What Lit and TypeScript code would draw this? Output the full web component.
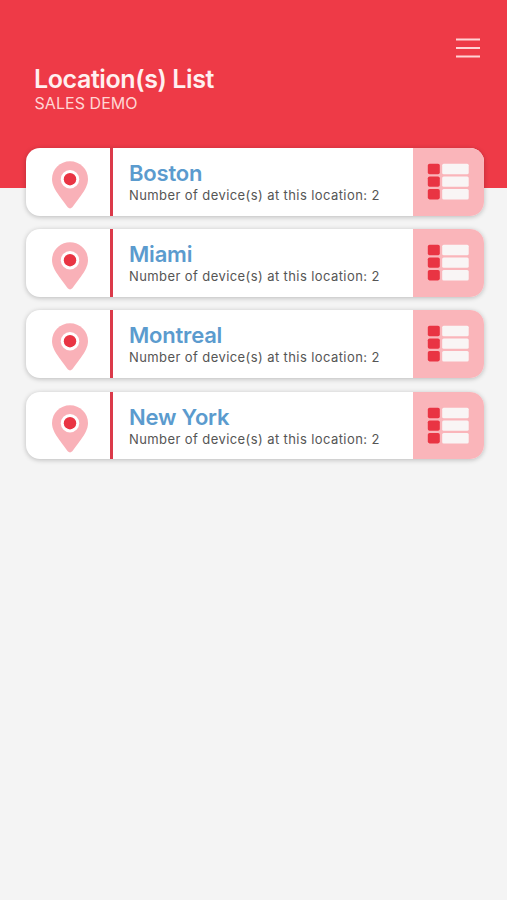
import { LitElement, html, svg, css } from "lit";
import { customElement, property } from "lit/decorators.js";

@customElement("location-card")
class LocationCard extends LitElement {
  @property() name = "";
  @property({ type: Number }) devices = 0;

  static styles = css`
    :host {
      display: flex;
      height: 67.5px;
      border-radius: 14px;
      overflow: hidden;
      background: #fff;
      box-shadow: 0 1px 5px rgba(0, 0, 0, 0.24);
    }
    .pin {
      box-sizing: border-box;
      width: 84px;
      padding: 13px 0 0 26px;
      flex: none;
    }
    svg {
      display: block;
    }
    .rule {
      width: 3px;
      flex: none;
      background: #db3a4a;
    }
    .info {
      flex: 1;
      padding: 12px 0 0 16px;
      white-space: nowrap;
    }
    .name {
      font-size: 22px;
      line-height: 26px;
      font-weight: 600;
      letter-spacing: -0.2px;
      color: #5b9bce;
    }
    .count {
      font-size: 13px;
      line-height: 18px;
      letter-spacing: 0.41px;
      color: #555;
    }
    .list {
      box-sizing: border-box;
      width: 71px;
      padding: 15px 0 0 14px;
      flex: none;
      background: #fab5ba;
    }
  `;

  render() {
    return html`
      <div class="pin">
        <svg width="36" height="48" viewBox="0 0 36 48">
          <path d="M18 .3C8 .3 0 8.300 0 18C0 24 3.500 29.500 7 34.500L15.700 46.300Q18 48.500 20.300 46.300L29 34.500C32.500 29.500 36 24 36 18C36 8.300 28 .3 18 .3Z" fill="#f9b1b8" />
          <circle cx="18" cy="18.200" r="9.200" fill="#fff" />
          <circle cx="18" cy="18.200" r="6.200" fill="#e93443" />
        </svg>
      </div>
      <div class="rule"></div>
      <div class="info">
        <div class="name">${this.name}</div>
        <div class="count">Number of device(s) at this location: ${this.devices}</div>
      </div>
      <div class="list">
        <svg width="42" height="37" viewBox="0 0 42 37">
          ${[0.8, 13.4, 26].map(
            (y) => svg`
              <rect x=".8" y=${y} width="12" height="10.4" rx="1.8" fill="#e93443" />
              <rect x="15.2" y=${y} width="26.500" height="10.4" rx="1.500" fill="#f9f5f5" />
            `
          )}
        </svg>
      </div>
    `;
  }
}

@customElement("app-root")
class AppRoot extends LitElement {
  static styles = css`
    :host {
      display: block;
      box-sizing: border-box;
      height: 900px;
      overflow: hidden;
      font-family: Inter, "Liberation Sans", sans-serif;
      background: linear-gradient(#ee3a47 188px, #f4f4f4 188px);
    }
    .head {
      box-sizing: border-box;
      height: 148px;
      padding: 38px 27px 0 34px;
      display: flex;
      justify-content: space-between;
      color: #fff0f0;
    }
    .titles {
      padding-top: 27px;
      white-space: nowrap;
    }
    .title {
      font-size: 25px;
      line-height: 29px;
      font-weight: 600;
      letter-spacing: -0.4px;
    }
    .sub {
      padding-left: 0.5px;
      font-size: 16px;
      line-height: 19px;
      letter-spacing: 0.05px;
      color: #ffd5d3;
    }
    .cards {
      display: flex;
      flex-direction: column;
      gap: 13.68px;
      padding: 0 23px 0 26px;
    }
  `;

  private locations = ["Boston", "Miami", "Montreal", "New York"];

  render() {
    return html`
      <div class="head">
        <div class="titles">
          <div class="title">Location(s) List</div>
          <div class="sub">SALES DEMO</div>
        </div>
        <svg width="24" height="20" viewBox="0 0 24 20" stroke="#ffd3d5" stroke-width="2">
          <path d="M0 1.500H24M0 10H24M0 18.500H24" />
        </svg>
      </div>
      <div class="cards">
        ${this.locations.map((n) => html`<location-card name=${n} devices="2"></location-card>`)}
      </div>
    `;
  }
}
